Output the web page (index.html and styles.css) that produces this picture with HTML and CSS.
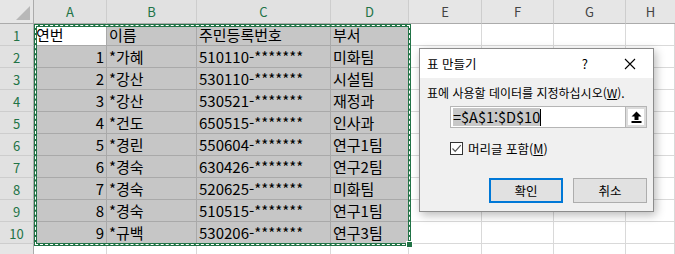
FILE: index.html
```html
<!DOCTYPE html>
<html lang="ko">
<head>
<meta charset="utf-8">
<link rel="stylesheet" href="styles.css">
</head>
<body>
<div class="app">
  <div class="sheet">
    <div class="corner"><span class="tri"></span></div>
    <div class="ch sel-h">A</div><div class="ch sel-h">B</div><div class="ch sel-h">C</div><div class="ch sel-h">D</div><div class="ch">E</div><div class="ch">F</div><div class="ch">G</div><div class="ch last">H</div>

    <div class="rh sel-h">1</div><div class="c active">연번</div><div class="c s">이름</div><div class="c s">주민등록번호</div><div class="c s">부서</div><div class="c"></div><div class="c"></div><div class="c"></div><div class="c"></div>
    <div class="rh sel-h">2</div><div class="c s n">1</div><div class="c s">*가혜</div><div class="c s">510110-*******</div><div class="c s">미화팀</div><div class="c"></div><div class="c"></div><div class="c"></div><div class="c"></div>
    <div class="rh sel-h">3</div><div class="c s n">2</div><div class="c s">*강산</div><div class="c s">530110-*******</div><div class="c s">시설팀</div><div class="c"></div><div class="c"></div><div class="c"></div><div class="c"></div>
    <div class="rh sel-h">4</div><div class="c s n">3</div><div class="c s">*강산</div><div class="c s">530521-*******</div><div class="c s">재정과</div><div class="c"></div><div class="c"></div><div class="c"></div><div class="c"></div>
    <div class="rh sel-h">5</div><div class="c s n">4</div><div class="c s">*건도</div><div class="c s">650515-*******</div><div class="c s">인사과</div><div class="c"></div><div class="c"></div><div class="c"></div><div class="c"></div>
    <div class="rh sel-h">6</div><div class="c s n">5</div><div class="c s">*경린</div><div class="c s">550604-*******</div><div class="c s">연구1팀</div><div class="c"></div><div class="c"></div><div class="c"></div><div class="c"></div>
    <div class="rh sel-h">7</div><div class="c s n">6</div><div class="c s">*경숙</div><div class="c s">630426-*******</div><div class="c s">연구2팀</div><div class="c"></div><div class="c"></div><div class="c"></div><div class="c"></div>
    <div class="rh sel-h">8</div><div class="c s n">7</div><div class="c s">*경숙</div><div class="c s">520625-*******</div><div class="c s">미화팀</div><div class="c"></div><div class="c"></div><div class="c"></div><div class="c"></div>
    <div class="rh sel-h">9</div><div class="c s n">8</div><div class="c s">*경숙</div><div class="c s">510515-*******</div><div class="c s">연구1팀</div><div class="c"></div><div class="c"></div><div class="c"></div><div class="c"></div>
    <div class="rh sel-h">10</div><div class="c s n">9</div><div class="c s">*규백</div><div class="c s">530206-*******</div><div class="c s">연구3팀</div><div class="c"></div><div class="c"></div><div class="c"></div><div class="c"></div>
    <div class="rh"></div><div class="c"></div><div class="c"></div><div class="c"></div><div class="c"></div><div class="c"></div><div class="c"></div><div class="c"></div><div class="c"></div>
  </div>

  <div class="marquee"></div>
  <div class="handle"></div>

  <div class="dialog">
    <div class="titlebar">
      <span class="title">표 만들기</span>
      <span class="help">?</span>
      <svg class="close" width="12" height="12" viewBox="0 0 12 12"><path d="M1 1L11 11M11 1L1 11" stroke="#000" stroke-width="1.1" fill="none"/></svg>
    </div>
    <div class="body">
      <div class="prompt">표에 사용할 데이터를 지정하십시오(<u>W</u>).</div>
      <div class="refedit">
        <div class="reftext"><span class="hl">=$A$1:$D$10</span><span class="caret"></span></div>
        <div class="refbtn">
          <svg width="11" height="12" viewBox="0 0 11 12"><path d="M5.5 0.5L10.5 5.5H7.5V9H3.5V5.5H0.5Z" fill="#000"/><rect x="0.5" y="10" width="10" height="2" fill="#000"/></svg>
        </div>
      </div>
      <label class="check">
        <span class="box"><svg width="11" height="11" viewBox="0 0 11 11"><path d="M1.5 5.5L4.2 8.3L9.8 2.2" stroke="#555" stroke-width="1.2" fill="none"/></svg></span>
        <span class="lbl">머리글 포함(<u>M</u>)</span>
      </label>
      <div class="buttons">
        <div class="btn primary">확인</div>
        <div class="btn">취소</div>
      </div>
    </div>
  </div>
</div>
</body>
</html>
```

FILE: styles.css
```css
html, body {
  margin: 0;
  padding: 0;
  background: #fff;
  overflow: hidden;
}
.app {
  position: relative;
  width: 675px;
  height: 254px;
  overflow: hidden;
  font-family: "Noto Sans CJK KR", "Noto Sans", sans-serif;
}
.sheet {
  display: grid;
  grid-template-columns: 34px 73px 90px 134px 78px 73px 72px 72px 49px;
  grid-template-rows: 24px repeat(11, 22px);
}
.corner {
  position: relative;
  background: #e6e6e6;
  border-right: 1px solid #ababab;
  border-bottom: 1px solid #ababab;
  box-sizing: border-box;
}
.tri {
  position: absolute;
  right: 3px;
  bottom: 3px;
  width: 0;
  height: 0;
  border-left: 14px solid transparent;
  border-bottom: 14px solid #b8b8b8;
}
.ch {
  background: #e6e6e6;
  border-right: 1px solid #cdcdcd;
  border-bottom: 1px solid #ababab;
  box-sizing: border-box;
  font-size: 13px;
  line-height: 24px;
  text-align: center;
  color: #444;
}
.ch.last { border-right: none; }
.rh {
  background: #e6e6e6;
  border-right: 1px solid #ababab;
  border-bottom: 1px solid #cdcdcd;
  box-sizing: border-box;
  font-size: 13px;
  line-height: 23px;
  text-align: center;
  color: #444;
}
.sel-h {
  background: #e1e1e1;
  color: #217346;
}
.c {
  border-right: 1px solid #d9d9d9;
  border-bottom: 1px solid #d9d9d9;
  box-sizing: border-box;
  font-size: 15px;
  line-height: 22px;
  padding: 0 2px 0 2px;
  color: #000;
  white-space: nowrap;
  overflow: hidden;
}
.c.s {
  background: #c6c6c6;
  border-color: #a9a9a9;
}
.c.active {
  background: #fff;
  border-right: 1px solid #a9a9a9;
  border-bottom: 1px solid #a9a9a9;
}
.c.n { text-align: right; }

.marquee {
  position: absolute;
  left: 34px;
  top: 24px;
  width: 377px;
  height: 222px;
  box-sizing: border-box;
  border: 3px solid #217346;
}
.marquee::after {
  content: "";
  position: absolute;
  inset: -2px;
  border: 1px dashed #fff;
}
.handle {
  position: absolute;
  left: 407px;
  top: 242px;
  width: 5px;
  height: 5px;
  background: #217346;
  outline: 1px solid #fff;
}

.dialog {
  position: absolute;
  left: 419px;
  top: 48px;
  width: 235px;
  height: 164px;
  box-sizing: border-box;
  border: 1px solid #8c8c8c;
  background: #f0f0f0;
  box-shadow: 2px 3px 9px rgba(0, 0, 0, 0.28);
  display: flex;
  flex-direction: column;
  font-size: 12px;
  color: #000;
}
.titlebar {
  height: 29px;
  background: #fff;
  display: flex;
  align-items: center;
  padding-left: 7px;
}
.title {
  flex: 1;
  font-size: 12.5px;
}
.help {
  font-size: 13px;
  margin-right: 36px;
}
.close {
  margin-right: 17px;
}
.body {
  flex: 1;
  display: flex;
  flex-direction: column;
  padding: 7px 6px 8px 7px;
}
.prompt {
  line-height: 16px;
  white-space: nowrap;
}
.refedit {
  margin: 5px 0 0 23px;
  height: 22px;
  display: flex;
  box-sizing: border-box;
  border: 1px solid #b5b5b5;
  background: #fff;
}
.reftext {
  flex: 1;
  display: flex;
  align-items: center;
  padding-left: 2px;
  font-size: 14.5px;
}
.hl {
  background: #c8c8c8;
  line-height: 18px;
}
.caret {
  width: 1px;
  height: 17px;
  background: #000;
}
.refbtn {
  width: 20px;
  display: flex;
  align-items: center;
  justify-content: center;
  border-left: 1px solid #b5b5b5;
  background: #fff;
  box-shadow: inset 0 0 0 2px #dcdcdc;
}
.check {
  display: flex;
  align-items: center;
  margin: 13px 0 0 23px;
  height: 14px;
}
.box {
  width: 13px;
  height: 13px;
  box-sizing: border-box;
  border: 1px solid #333;
  background: #fff;
  display: flex;
  align-items: center;
  justify-content: center;
  margin-right: 5px;
}
.lbl {
  font-size: 12.5px;
}
.buttons {
  margin-top: auto;
  display: flex;
  justify-content: flex-end;
  gap: 10px;
}
.btn {
  width: 74px;
  height: 25px;
  box-sizing: border-box;
  border: 1px solid #adadad;
  background: #e1e1e1;
  display: flex;
  align-items: center;
  justify-content: center;
  font-size: 12.5px;
}
.btn.primary {
  border: 2px solid #0078d7;
}
```
